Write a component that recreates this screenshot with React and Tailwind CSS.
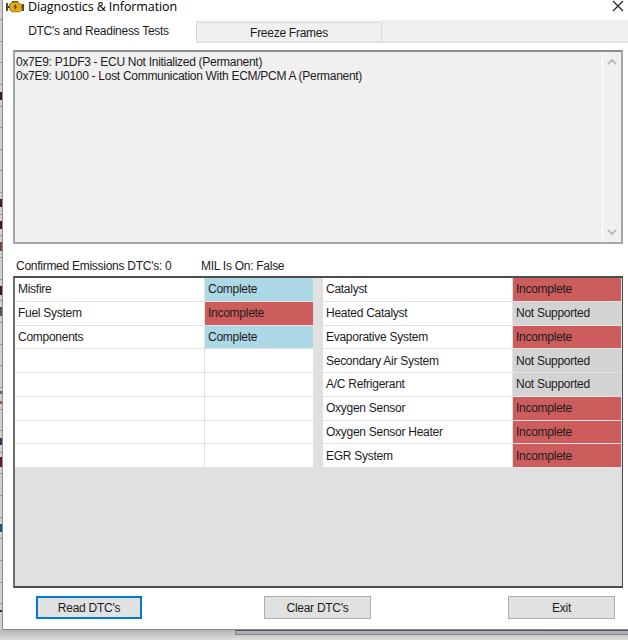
import React from 'react';

const codes = [
  { text: '0x7E9: P1DF3 - ECU Not Initialized (Permanent)', style: 'tracking-[-0.29px]' },
  { text: '0x7E9: U0100 - Lost Communication With ECM/PCM A (Permanent)', style: 'tracking-[-0.29px]' },
];

const leftTests = [
  { name: 'Misfire', status: 'Complete' },
  { name: 'Fuel System', status: 'Incomplete' },
  { name: 'Components', status: 'Complete' },
  {},
  {},
  {},
  {},
  {},
];

const rightTests = [
  { name: 'Catalyst', status: 'Incomplete' },
  { name: 'Heated Catalyst', status: 'Not Supported' },
  { name: 'Evaporative System', status: 'Incomplete' },
  { name: 'Secondary Air System', status: 'Not Supported' },
  { name: 'A/C Refrigerant', status: 'Not Supported' },
  { name: 'Oxygen Sensor', status: 'Incomplete' },
  { name: 'Oxygen Sensor Heater', status: 'Incomplete' },
  { name: 'EGR System', status: 'Incomplete' },
];

const statusColors = {
  Complete: 'bg-[#add8e6]',
  Incomplete: 'bg-[#cd5c5c]',
  'Not Supported': 'bg-[#d3d3d3]',
};

// Slivers of the window behind, showing past the left edge
const marks = [
  'top-[92px] h-[8px] bg-[#3c2020]',
  'top-[199px] h-[8px] bg-[#4a1824]',
  'top-[221px] h-[8px] bg-[#4a1824]',
  'top-[242px] h-[9px] bg-[#7a4a34]',
  'top-[286px] h-[9px] bg-[#4a1028]',
  'top-[307px] h-[9px] bg-[#555555]',
  'top-[391px] h-[3px] bg-[#8a5a4a]',
  'top-[401px] h-[3px] bg-[#8a5a4a]',
  'top-[438px] h-[7px] bg-[#3a3060]',
  'top-[457px] h-[10px] bg-[#701828]',
  'top-[524px] h-[8px] bg-[#1c4f8c]',
  'top-[610px] h-[2px] bg-[#303030]',
];

const EngineIcon = () => (
  <svg width="18" height="14" viewBox="0 0 18 14" className="shrink-0">
    <path d="M1 3v8M1 7h3M17 4v7M15 7h2" stroke="#3d3a30" strokeWidth="1.8" fill="none" />
    <path d="M6 1h6v1.6H6z" fill="#5a4a20" />
    <path d="M3.5 4 6 2.2h6l2 1.6 1.8.8v5.6l-2.3 1.6H6L3.5 9.5z" fill="#e3a90f" stroke="#8a6a18" strokeWidth=".8" />
    <path d="M10.2 3.5 7.3 7.2h1.9l-1 3.2 3.2-4H9.5z" fill="#4a3510" />
  </svg>
);

const TestTable = ({ tests }) => (
  <div className="grid h-[190px] w-[298px] grid-cols-[190px_108px] grid-rows-8">
    {tests.map((t, i) => (
      <React.Fragment key={i}>
        <div className="flex items-center border-r border-b border-[#e2e2e2] bg-white pl-[3px]">{t.name}</div>
        <div className={`flex items-center border-b border-[#e2e2e2] pl-[3px] ${statusColors[t.status] || 'bg-white'}`}>
          {t.status}
        </div>
      </React.Fragment>
    ))}
  </div>
);

const Arrow = ({ d }) => (
  <svg width="10" height="8" viewBox="0 0 10 8">
    <path d={d} fill="none" stroke="#bcbcbc" strokeWidth="2" />
  </svg>
);

const App = () => (
  <div className="relative flex h-[640px] w-[628px] flex-col overflow-hidden bg-[#d6d6d6] font-['Liberation_Sans',Arial,sans-serif] text-[12px] leading-[14px] tracking-[-0.27px] whitespace-pre text-[#1c1c1c]">
    <div className="flex h-[630px] shrink-0">
      <div className="w-[3px] shrink-0 border-r border-[#8e8e8e] bg-[#cfcfcf]">
        <div className="h-[20px] border-b border-[#9a9a9a]" />
        {Array.from({ length: 27 }, (_, i) => (
          <div key={i} className="h-[21.65px] border-b border-[#9a9a9a]" />
        ))}
      </div>

      <div className="flex min-w-0 flex-1 flex-col border-b border-[#858585] bg-white">
        <div className="flex h-[20px] shrink-0 items-start justify-between">
          <div className="flex pl-[3px]">
            <EngineIcon />
            <span className="pl-[4px] font-['Open_Sans',sans-serif] text-[12.5px] leading-[13px] tracking-[-0.1px] text-black">
              Diagnostics &amp; Information
            </span>
          </div>
          <svg width="20" height="14" viewBox="0 0 20 14">
            <path d="m5 1 10 10M15 1 5 11" stroke="#222" strokeWidth="1.2" />
          </svg>
        </div>

        <div className="flex h-[23px] shrink-0 bg-[#f0f0f0]">
          <div className="flex w-[193px] justify-center bg-white pt-[4px] pr-[2px]">DTC's and Readiness Tests</div>
          <div className="flex flex-1 border-b-2 border-[#e2e2e2] pt-[2px]">
            <div className="flex w-[186px] justify-center border border-b-0 border-[#d9d9d9] pt-[3px]">Freeze Frames</div>
          </div>
        </div>

        <div className="mt-[7px] ml-[10px] flex h-[194px] w-[610px] shrink-0 justify-between border-2 border-[#a6a6a6] border-t-[#8c8c8c] bg-[#f0f0f0]">
          <div className="pt-[3px] pl-[1px]">
            {codes.map((c) => (
              <div key={c.text} className={c.style}>{c.text}</div>
            ))}
          </div>
          <div className="flex w-[19px] flex-col items-center justify-between border-l border-white py-[6px]">
            <Arrow d="M1 6 5 2l4 4" />
            <Arrow d="m1 2 4 4 4-4" />
          </div>
        </div>

        <div className="flex h-[32px] shrink-0 pt-[15px] pl-[13px]">
          <span className="w-[185px]">Confirmed Emissions DTC's: 0</span>
          <span>MIL Is On: False</span>
        </div>

        <div className="ml-[10px] flex h-[312px] w-[610px] shrink-0 justify-between border-2 border-[#4c4c4c] border-r-[1.5px] border-l-[#6c6c6c] bg-[#e0e0e0] pr-px">
          <TestTable tests={leftTests} />
          <TestTable tests={rightTests} />
        </div>

        <div className="flex shrink-0 pt-[8px] pl-[33px]">
          <button className="h-[23px] w-[106px] border-2 border-[#0078d7] bg-[#e1e1e1]">Read DTC's</button>
          <button className="ml-[122px] h-[23px] w-[107px] border border-[#adadad] bg-[#e1e1e1]">Clear DTC's</button>
          <button className="ml-[137px] h-[23px] w-[107px] border border-[#adadad] bg-[#e1e1e1]">Exit</button>
        </div>
      </div>
    </div>

    <div className="flex h-[10px] bg-linear-to-b from-[#b4b4b4] to-[#dedede]">
      <div className="ml-[235px] h-[5px] flex-1 border-t border-b border-l border-t-[#55556a] border-b-[#858585] border-l-[#858585] bg-[#b0b0b0]" />
    </div>

    {marks.map((m) => (
      <div key={m} className={`absolute left-0 w-[2px] ${m}`} />
    ))}
  </div>
);

export default App;
